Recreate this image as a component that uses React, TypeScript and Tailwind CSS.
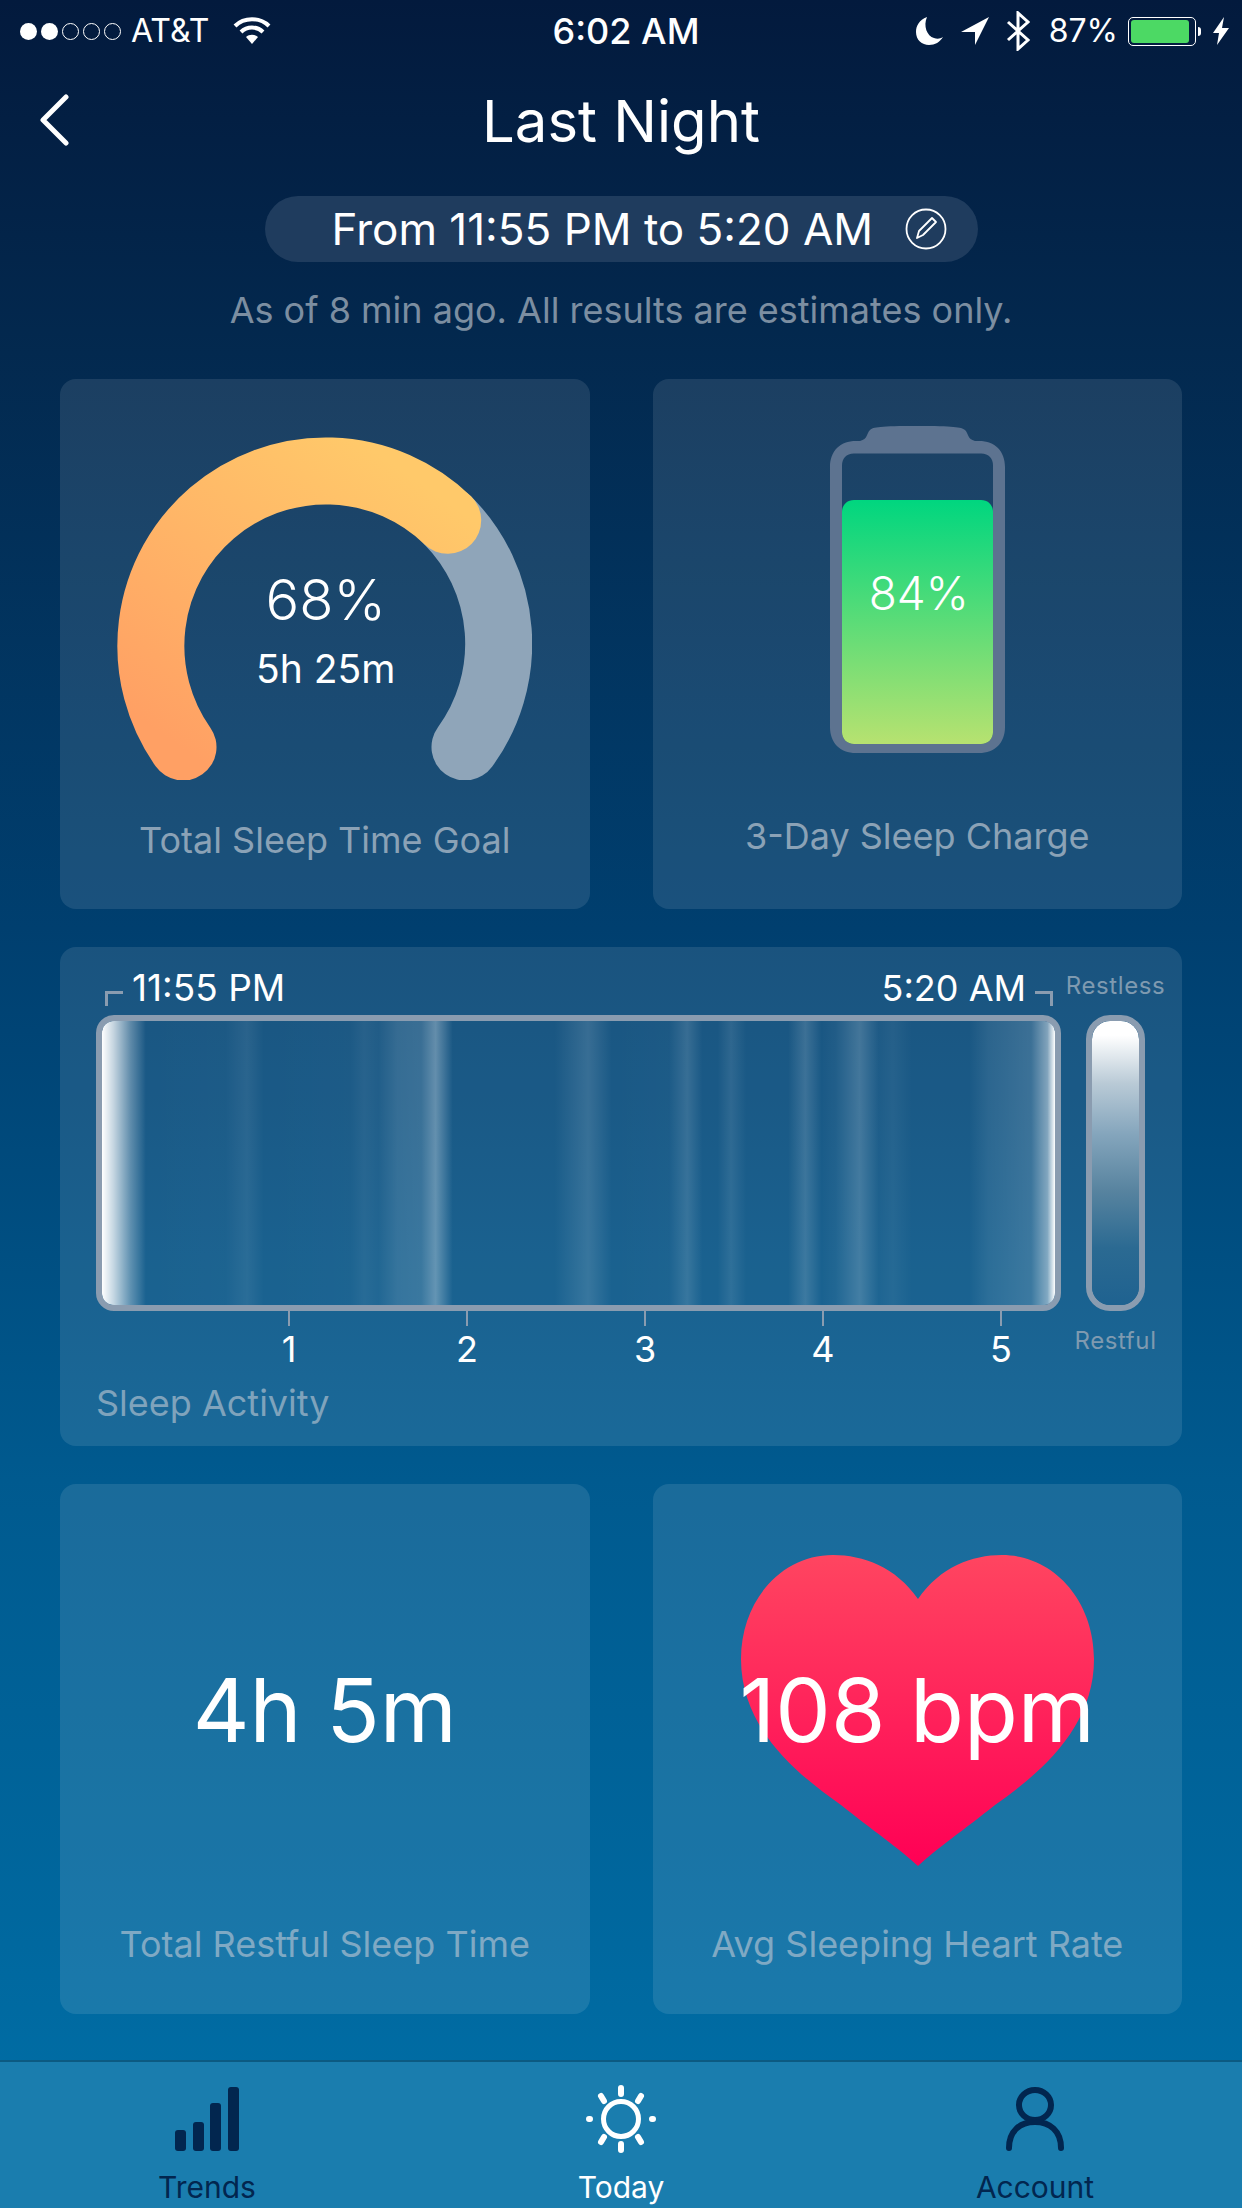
const activityBands =
  "bg-[linear-gradient(90deg,rgba(255,255,255,1)_0%,rgba(255,255,255,0.75)_1.2%,rgba(255,255,255,0.3)_3%,rgba(255,255,255,0)_4.6%,rgba(255,255,255,0.01)_13%,rgba(255,255,255,0.07)_15.2%,rgba(255,255,255,0)_17%,rgba(255,255,255,0.01)_26%,rgba(255,255,255,0.06)_27.5%,rgba(255,255,255,0.03)_29%,rgba(255,255,255,0.12)_31%,rgba(255,255,255,0.14)_33.5%,rgba(255,255,255,0.32)_35%,rgba(255,255,255,0)_36.8%,rgba(255,255,255,0)_47.5%,rgba(255,255,255,0.13)_51%,rgba(255,255,255,0)_53.5%,rgba(255,255,255,0.01)_59.5%,rgba(255,255,255,0.13)_61.4%,rgba(255,255,255,0)_63%,rgba(255,255,255,0)_64.6%,rgba(255,255,255,0.09)_66%,rgba(255,255,255,0)_67.6%,rgba(255,255,255,0)_72%,rgba(255,255,255,0.15)_73.8%,rgba(255,255,255,0)_75.5%,rgba(255,255,255,0.03)_77%,rgba(255,255,255,0.18)_79.5%,rgba(255,255,255,0.02)_81.5%,rgba(255,255,255,0.05)_83%,rgba(255,255,255,0)_85%,rgba(255,255,255,0)_91%,rgba(255,255,255,0.08)_93%,rgba(255,255,255,0.15)_97.5%,rgba(255,255,255,0.45)_99.2%,rgba(255,255,255,1)_100%)]"

function StatusBar() {
  return (
    <div className="grid h-[62px] grid-cols-3 items-center text-[32px] text-white">
      <div className="flex items-center pl-[20px]">
        <div className="flex items-center gap-[4px]">
          <span className="h-[17px] w-[17px] rounded-full bg-white" />
          <span className="h-[17px] w-[17px] rounded-full bg-white" />
          <span className="h-[17px] w-[17px] rounded-full border border-white" />
          <span className="h-[17px] w-[17px] rounded-full border border-white" />
          <span className="h-[17px] w-[17px] rounded-full border border-white" />
        </div>
        <span className="ml-[10px]">AT&amp;T</span>
        <svg className="ml-[24px]" width="38" height="28" viewBox="0 0 38 28" fill="none" stroke="white" strokeWidth="4">
          <path d="M2 9C11 0 27 0 36 9" />
          <path d="M8 15C14 9 24 9 30 15" />
          <path d="M19 27l-6-7c3-3 9-3 12 0z" fill="white" stroke="none" />
        </svg>
      </div>
      <div className="pl-[10px] text-center text-[36px] font-medium">6:02 AM</div>
      <div className="flex items-center justify-end pr-[13px]">
        <svg width="28" height="28" viewBox="0 0 28 28">
          <path d="M11 0C3 3 0 9 0 15c0 8 6 13 13 13 6 0 11-3 14-8-3 2-6 2-9 1C11 19 7 9 11 0z" fill="white" />
        </svg>
        <svg className="ml-[17px]" width="28" height="28" viewBox="0 0 28 28">
          <path d="M28 0L0 15h14v13z" fill="white" />
        </svg>
        <svg className="ml-[17px]" width="25" height="40" viewBox="0 0 25 40" fill="none" stroke="white" strokeWidth="3">
          <path d="M2 11l20 18-10 9V2l10 9L2 29" />
        </svg>
        <span className="ml-[18px]">87%</span>
        <div className="ml-[10px] h-[29px] w-[68px] rounded-[5px] border border-white p-[2px]">
          <div className="h-full w-[58px] rounded-[3px] bg-[#4cd964]" />
        </div>
        <div className="ml-[2px] h-[9px] w-[3px] rounded-r-full bg-white" />
        <svg className="ml-[12px]" width="16" height="28" viewBox="0 0 16 28">
          <path d="M11 0L0 16h6L4 28l12-17H9z" fill="white" />
        </svg>
      </div>
    </div>
  )
}

function Header() {
  return (
    <div className="flex flex-col items-center">
      <div className="relative flex h-[62px] w-full items-center justify-center">
        <svg className="absolute left-[38px] top-[4px]" width="32" height="52" viewBox="0 0 32 52" fill="none" stroke="white" strokeWidth="5" strokeLinecap="round" strokeLinejoin="round">
          <path d="M28 3L5 26l23 23" />
        </svg>
        <h1 className="text-[58px] leading-[62px] font-normal text-white">Last Night</h1>
      </div>
      <div className="mt-[44px] flex h-[66px] w-[713px] items-center rounded-[33px] bg-[#1f3c5e] pl-[67px]">
        <span className="whitespace-nowrap text-[44px] text-white">From 11:55 PM to 5:20 AM</span>
        <svg className="ml-[32px] shrink-0" width="42" height="42" viewBox="0 0 42 42" fill="none" stroke="white" strokeWidth="1.8">
          <circle cx="21" cy="21" r="19.5" />
          <path d="M12 30l2-7 13-13 4 4-13 13z" strokeLinejoin="round" />
        </svg>
      </div>
      <p className="mt-[26px] text-[36px] leading-[44px] text-[#7c8ea1]">As of 8 min ago. All results are estimates only.</p>
    </div>
  )
}

function GaugeCard() {
  return (
    <div className="flex h-[530px] flex-col items-center rounded-[16px] bg-white/10 pt-[57px]">
      <div className="relative -ml-[1px]">
        <svg className="block" width="416" height="344" viewBox="0 0 416 344" fill="none" strokeWidth="67" strokeLinecap="round">
          <defs>
            <linearGradient id="gauge" x1="0.85" y1="0" x2="0.1" y2="1">
              <stop offset="0" stopColor="#ffc96a" />
              <stop offset="1" stopColor="#ffa064" />
            </linearGradient>
          </defs>
          <path d="M331.7 84.3A175 175 0 0 1 349 311" stroke="#8fa5b9" />
          <path d="M67 311A175 175 0 0 1 331.7 84.3" stroke="url(#gauge)" />
        </svg>
        <div className="absolute inset-x-0 top-[130px] flex flex-col items-center pl-[3px] text-white">
          <span className="text-[56px] leading-[68px] font-light">68%</span>
          <span className="mt-[11px] text-[39px] leading-[48px]">5h 25m</span>
        </div>
      </div>
      <p className="mt-[38px] text-[36px] leading-[44px] text-[#8ba2b6]">Total Sleep Time Goal</p>
    </div>
  )
}

function ChargeCard() {
  return (
    <div className="flex h-[530px] flex-col items-center rounded-[16px] bg-white/10 pt-[47px]">
      <div className="relative">
        <svg className="block" width="175" height="327" viewBox="0 0 175 327" fill="none">
          <defs>
            <linearGradient id="charge" x1="0" y1="0" x2="0" y2="1">
              <stop offset="0" stopColor="#00d67f" />
              <stop offset="1" stopColor="#b7e270" />
            </linearGradient>
          </defs>
          <path
            fillRule="evenodd"
            d="M30 15C38 13 36 8 40 4C43 1 50 0 87 0S131 1 135 4C139 8 137 13 145 15h4c16 0 26 10 26 26v260c0 16-10 26-26 26H26c-16 0-26-10-26-26V41c0-16 10-26 26-26zM24 27.5c-8 0-12 5-12 12V306c0 7 5 12 12 12h127c7 0 12-5 12-12V39.5c0-7-4-12-12-12z"
            fill="#5d7390"
          />
          <path d="M12 86c0-7 5-12 12-12h127c7 0 12 5 12 12v220c0 7-5 12-12 12H24c-7 0-12-5-12-12z" fill="url(#charge)" />
        </svg>
        <span className="absolute inset-x-0 top-[137px] pl-[3px] text-center text-[46px] leading-[60px] font-light text-white">84%</span>
      </div>
      <p className="mt-[61px] text-[36px] leading-[44px] text-[#8ba2b6]">3-Day Sleep Charge</p>
    </div>
  )
}

function ActivityCard() {
  return (
    <div className="col-span-2 flex h-[499px] rounded-[16px] bg-white/10 pl-[36px]">
      <div className="flex w-[965px] flex-col">
        <div className="flex h-[68px] items-end justify-between pb-[9px] pl-[9px] pr-[8px] text-[36px] leading-[36px] text-white">
          <div className="flex items-end">
            <span className="h-[15px] w-[18px] border-t-[3px] border-l-[3px] border-[#8a9cb0]" />
            <span className="ml-[9px] text-[37px]">11:55 PM</span>
          </div>
          <div className="flex items-end">
            <span className="mr-[9px]">5:20 AM</span>
            <span className="h-[15px] w-[18px] border-t-[3px] border-r-[3px] border-[#8a9cb0]" />
          </div>
        </div>
        <div className="h-[296px] overflow-hidden rounded-[18px] border-[6px] border-[#8a9cb0]">
          <div className={"h-full w-full rounded-[10px] " + activityBands} />
        </div>
        <div className="ml-[104px] flex">
          {[1, 2, 3, 4, 5].map((hour) => (
            <div key={hour} className="flex w-[178px] shrink-0 flex-col items-center text-white">
              <span className="h-[15px] w-[2px] bg-[#8a9cb0]" />
              <span className="mt-[4px] text-[36px] leading-[38px]">{hour}</span>
            </div>
          ))}
        </div>
        <p className="mt-[13px] text-[36px] leading-[44px] text-[#7fa3bc]">Sleep Activity</p>
      </div>
      <div className="ml-[25px] flex w-[59px] flex-col items-center">
        <div className="flex h-[68px] items-center justify-center pt-[10px]">
          <span className="whitespace-nowrap text-[24px] tracking-[0.6px] text-[#7f9ab0]">Restless</span>
        </div>
        <div className="h-[296px] w-[59px] shrink-0 overflow-hidden rounded-[24px] border-[6px] border-[#8a9cb0]">
          <div className="h-full w-full rounded-[18px] bg-[linear-gradient(180deg,#ffffff_0%,#ffffff_5%,#b9cad6_22%,#84a5bc_40%,#57839f_60%,#2b6a92_80%,#1f6290_100%)]" />
        </div>
        <span className="mt-[14px] text-[24px] leading-[32px] tracking-[0.6px] text-[#7f9ab0]">Restful</span>
      </div>
    </div>
  )
}

function RestfulCard() {
  return (
    <div className="flex h-[530px] flex-col items-center rounded-[16px] bg-white/10 pb-[48px] pt-[14px]">
      <div className="flex flex-1 items-center justify-center">
        <span className="text-[88px] leading-none text-white">4h 5m</span>
      </div>
      <p className="text-[36px] leading-[44px] text-[#7fa9c4]">Total Restful Sleep Time</p>
    </div>
  )
}

function HeartCard() {
  return (
    <div className="flex h-[530px] flex-col items-center rounded-[16px] bg-white/10 pb-[48px] pt-[14px]">
      <div className="flex flex-1 items-center justify-center">
        <div className="relative">
          <svg className="block" width="353" height="311" viewBox="0 0 353 311">
            <defs>
              <linearGradient id="heart" x1="0" y1="0" x2="0" y2="1">
                <stop offset="0" stopColor="#ff4560" />
                <stop offset="1" stopColor="#ff0055" />
              </linearGradient>
            </defs>
            <path d="M177 44C155 12 122 0 92 0C40 0 0 46 0 104C0 170 50 215 100 250C130 274 160 295 177 311C194 295 224 274 254 250C304 215 353 170 353 104C353 46 313 0 261 0C231 0 199 12 177 44Z" fill="url(#heart)" />
          </svg>
          <div className="absolute inset-0 flex items-center justify-center">
            <span className="whitespace-nowrap text-[88px] leading-none text-white">108 bpm</span>
          </div>
        </div>
      </div>
      <p className="text-[36px] leading-[44px] text-[#7fa9c4]">Avg Sleeping Heart Rate</p>
    </div>
  )
}

function TabBar() {
  return (
    <div className="grid h-[148px] grid-cols-3 border-t-2 border-[#0c5a82] bg-[#1a7dae] text-[30px]">
      <div className="flex flex-col items-center pt-[25px] text-[#02264f]">
        <svg className="block" width="64" height="64" viewBox="0 0 64 64" fill="#02264f">
          <rect x="0" y="43" width="11" height="21" rx="3" />
          <rect x="18" y="35" width="11" height="29" rx="3" />
          <rect x="35" y="16" width="11" height="48" rx="3" />
          <rect x="53" y="0" width="11" height="64" rx="3" />
        </svg>
        <span className="mt-[18px] leading-[36px]">Trends</span>
      </div>
      <div className="flex flex-col items-center pt-[23px] text-white">
        <svg className="block" width="70" height="68" viewBox="0 0 70 68" fill="none" stroke="white">
          <circle cx="35" cy="34" r="17.5" strokeWidth="5" />
          <g strokeWidth="6" strokeLinecap="round">
            <path d="M35 3v6M35 59v6M3 34h1M66 34h1M15 11l3 5M55 11l-3 5M15 57l3-5M55 57l-3-5" />
          </g>
        </svg>
        <span className="mt-[16px] leading-[36px]">Today</span>
      </div>
      <div className="flex flex-col items-center pt-[25px] text-[#02264f]">
        <svg className="block" width="58" height="64" viewBox="0 0 58 64" fill="none" stroke="#02264f" strokeWidth="6" strokeLinecap="round">
          <ellipse cx="29" cy="18" rx="16" ry="15" />
          <path d="M3 61C3 44 14 35 29 35s26 9 26 26" />
        </svg>
        <span className="mt-[18px] leading-[36px]">Account</span>
      </div>
    </div>
  )
}

export default function App() {
  return (
    <div className="flex h-[2208px] w-[1242px] flex-col overflow-hidden bg-[linear-gradient(180deg,#031a3d_0%,#03294f_16%,#003f6f_42%,#005a8f_67%,#0070a8_100%)] font-[Inter,sans-serif]">
      <StatusBar />
      <div className="mt-[28px]">
        <Header />
      </div>
      <div className="mt-[47px] grid grid-cols-2 gap-x-[63px] gap-y-[38px] px-[60px]">
        <GaugeCard />
        <ChargeCard />
        <ActivityCard />
        <RestfulCard />
        <HeartCard />
      </div>
      <div className="mt-auto">
        <TabBar />
      </div>
    </div>
  )
}
